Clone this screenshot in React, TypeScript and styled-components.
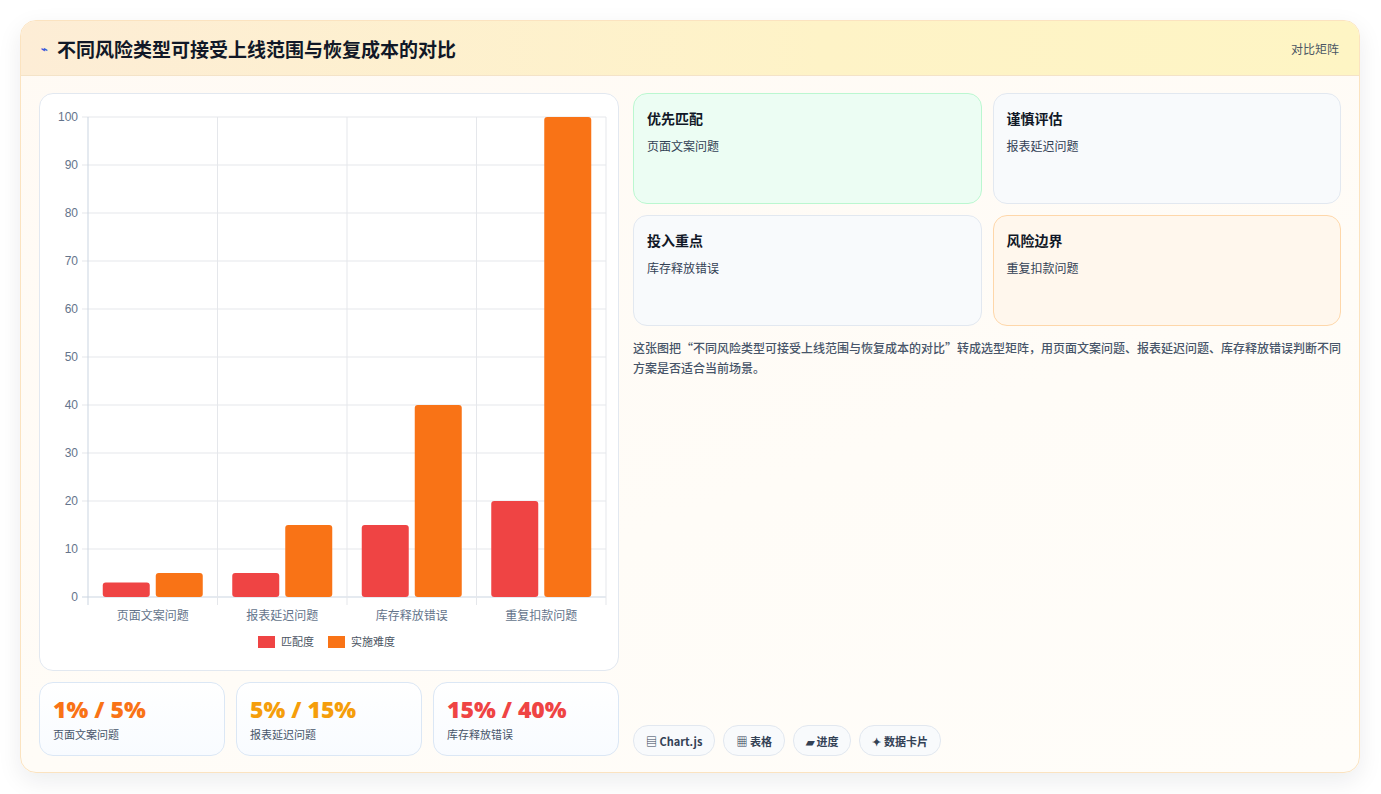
import React from "react";
import styled, { createGlobalStyle } from "styled-components";

const Global = createGlobalStyle`
  html, body { margin: 0; padding: 0; background: #ffffff; }
  body { font-family: "Noto Sans CJK SC", "Noto Sans", sans-serif; color: #0f172a; }
`;

const Page = styled.div`
  padding: 20px 21px 21px 20px;
  height: 794px;
  box-sizing: border-box;
`;

const Card = styled.div`
  height: 753px;
  box-sizing: border-box;
  border: 1px solid #fbe3c0;
  border-radius: 16px;
  background: linear-gradient(160deg, #fffaf4 0%, #fffcf7 60%, #fffdf9 100%);
  box-shadow: 0 8px 24px rgba(15, 23, 42, 0.08);
  overflow: hidden;
  display: flex;
  flex-direction: column;
`;

const Header = styled.div`
  height: 55px;
  flex: none;
  box-sizing: border-box;
  display: flex;
  align-items: center;
  justify-content: space-between;
  padding: 0 20px;
  background: linear-gradient(90deg, #fdedd6 0%, #fef3c7 60%, #fef5c4 100%);
  border-bottom: 1px solid #f4e3c8;
`;

const Title = styled.h1`
  margin: 0;
  font-size: 19px;
  font-weight: 700;
  color: #111827;
  display: flex;
  align-items: center;
  gap: 9px;
`;

const Bolt = styled.span`
  font-size: 11px;
  color: #3b5bdb;
`;

const HeaderTag = styled.span`
  font-size: 12px;
  color: #4b5563;
`;

const Body = styled.div`
  flex: 1;
  display: grid;
  grid-template-columns: 580px 1fr;
  gap: 14px;
  padding: 17px 18px 17px 18px;
`;

const LeftCol = styled.div`
  display: flex;
  flex-direction: column;
  gap: 11px;
`;

const ChartPanel = styled.div`
  height: 578px;
  box-sizing: border-box;
  background: #fff;
  border: 1px solid #e2e8f0;
  border-radius: 14px;
`;

const StatRow = styled.div`
  display: grid;
  grid-template-columns: repeat(3, 1fr);
  gap: 11px;
`;

const Stat = styled.div`
  height: 74px;
  box-sizing: border-box;
  border: 1px solid #dbe7f5;
  border-radius: 14px;
  background: linear-gradient(180deg, #ffffff, #f8fbff);
  padding: 10px 13px;
`;

const StatValue = styled.div<{ $c: string }>`
  font-family: "Open Sans", "Noto Sans", sans-serif;
  font-weight: 800;
  font-size: 23px;
  line-height: 32px;
  color: ${(p) => p.$c};
`;

const StatLabel = styled.div`
  font-size: 11px;
  color: #475569;
  margin-top: 1px;
`;

const RightCol = styled.div`
  display: flex;
  flex-direction: column;
`;

const Grid = styled.div`
  display: grid;
  grid-template-columns: 1fr 1fr;
  gap: 11px;
`;

const Quad = styled.div<{ $bg: string; $bd: string }>`
  height: 111px;
  box-sizing: border-box;
  border: 1px solid ${(p) => p.$bd};
  background: ${(p) => p.$bg};
  border-radius: 14px;
  padding: 14px 13px;
`;

const QuadTitle = styled.div`
  font-size: 14px;
  font-weight: 700;
  color: #111827;
`;

const QuadText = styled.div`
  font-size: 12px;
  color: #334155;
  margin-top: 9px;
`;

const Desc = styled.p`
  margin: 12px 0 0;
  font-size: 12px;
  line-height: 20px;
  color: #475569;
  font-weight: 500;
`;

const Tags = styled.div`
  margin-top: auto;
  display: flex;
  gap: 8px;
  margin-bottom: 0px;
`;

const Tag = styled.span`
  display: inline-flex;
  align-items: center;
  gap: 4px;
  height: 29px;
  padding: 0 12px;
  border: 1px solid #e2e8f0;
  border-radius: 15px;
  background: #f8fafc;
  font-size: 11px;
  font-weight: 600;
  color: #334155;
`;

const data = [
  { name: "页面文案问题", a: 3, b: 5 },
  { name: "报表延迟问题", a: 5, b: 15 },
  { name: "库存释放错误", a: 15, b: 40 },
  { name: "重复扣款问题", a: 20, b: 100 },
];

const Chart = () => {
  const x0 = 48, x1 = 566, y0 = 23, y1 = 503;
  const cw = (x1 - x0) / 4;
  const yv = (v: number) => y1 - ((y1 - y0) * v) / 100;
  const font = { fontFamily: "'Noto Sans CJK SC', sans-serif", fontSize: 12, fill: "#64748b" } as const;
  return (
    <svg width="578" height="576" viewBox="0 0 578 576">
      {Array.from({ length: 11 }, (_, i) => i * 10).map((v) => (
        <g key={v}>
          <line x1={x0 - 6} x2={x1} y1={yv(v)} y2={yv(v)} stroke={v === 0 ? "#cbd5e1" : "#e5e7eb"} />
          <text x={x0 - 10} y={yv(v) + 4} textAnchor="end" style={{ ...font, fontFamily: "'Liberation Sans', sans-serif" }}>{v}</text>
        </g>
      ))}
      {[0, 1, 2, 3, 4].map((i) => (
        <line key={i} x1={x0 + cw * i} x2={x0 + cw * i} y1={y0} y2={y1 + 8} stroke={i === 0 ? "#cbd5e1" : "#e5e7eb"} />
      ))}
      {data.map((d, i) => {
        const cx = x0 + cw * i + cw / 2;
        return (
          <g key={d.name}>
            <rect x={cx - 50} y={yv(d.a)} width={47} height={y1 - yv(d.a)} rx={3} fill="#ef4444" />
            <rect x={cx + 3} y={yv(d.b)} width={47} height={y1 - yv(d.b)} rx={3} fill="#f97316" />
            <text x={cx} y={y1 + 23} textAnchor="middle" style={font}>{d.name}</text>
          </g>
        );
      })}
      <rect x={218} y={542} width={17} height={12} fill="#ef4444" />
      <text x={241} y={552} style={{ ...font, fontSize: 11, fill: "#4b5563" }}>匹配度</text>
      <rect x={288} y={542} width={17} height={12} fill="#f97316" />
      <text x={311} y={552} style={{ ...font, fontSize: 11, fill: "#4b5563" }}>实施难度</text>
    </svg>
  );
};

export default function App() {
  return (
    <Page>
      <Global />
      <Card>
        <Header>
          <Title><Bolt>⌁</Bolt>不同风险类型可接受上线范围与恢复成本的对比</Title>
          <HeaderTag>对比矩阵</HeaderTag>
        </Header>
        <Body>
          <LeftCol>
            <ChartPanel><Chart /></ChartPanel>
            <StatRow>
              <Stat><StatValue $c="#f97316">1% / 5%</StatValue><StatLabel>页面文案问题</StatLabel></Stat>
              <Stat><StatValue $c="#f59e0b">5% / 15%</StatValue><StatLabel>报表延迟问题</StatLabel></Stat>
              <Stat><StatValue $c="#ef4444">15% / 40%</StatValue><StatLabel>库存释放错误</StatLabel></Stat>
            </StatRow>
          </LeftCol>
          <RightCol>
            <Grid>
              <Quad $bg="#ecfdf3" $bd="#bbf7d0"><QuadTitle>优先匹配</QuadTitle><QuadText>页面文案问题</QuadText></Quad>
              <Quad $bg="#f8fafc" $bd="#e2e8f0"><QuadTitle>谨慎评估</QuadTitle><QuadText>报表延迟问题</QuadText></Quad>
              <Quad $bg="#f8fafc" $bd="#e2e8f0"><QuadTitle>投入重点</QuadTitle><QuadText>库存释放错误</QuadText></Quad>
              <Quad $bg="#fff7ed" $bd="#fed7aa"><QuadTitle>风险边界</QuadTitle><QuadText>重复扣款问题</QuadText></Quad>
            </Grid>
            <Desc>这张图把“不同风险类型可接受上线范围与恢复成本的对比”转成选型矩阵，用页面文案问题、报表延迟问题、库存释放错误判断不同方案是否适合当前场景。</Desc>
            <Tags>
              <Tag>▤ Chart.js</Tag>
              <Tag>▦ 表格</Tag>
              <Tag>▰ 进度</Tag>
              <Tag>✦ 数据卡片</Tag>
            </Tags>
          </RightCol>
        </Body>
      </Card>
    </Page>
  );
}
